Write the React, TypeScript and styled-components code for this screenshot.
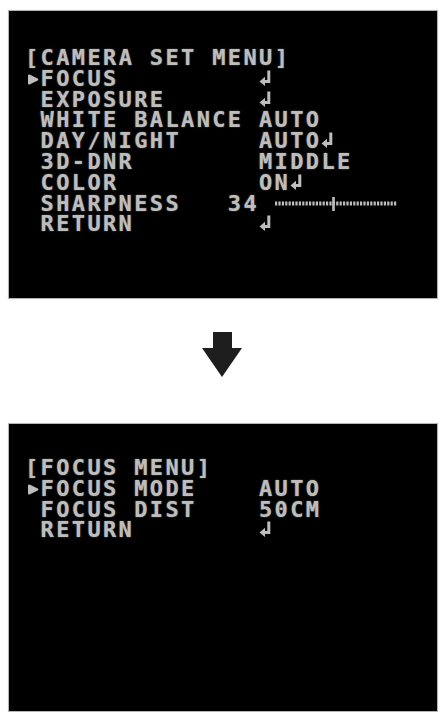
import React from "react";
import styled, { createGlobalStyle } from "styled-components";

const CELL = 15.6;
const LINE = 20.8;

const GlobalStyle = createGlobalStyle`
  html, body {
    margin: 0;
    padding: 0;
    background: #fff;
  }
  * {
    box-sizing: border-box;
  }
`;

interface Row {
  label: string;
  value?: string;
  enter?: boolean;
  slider?: boolean;
  selected?: boolean;
}

const cameraRows: Row[] = [
  { label: "FOCUS", enter: true, selected: true },
  { label: "EXPOSURE", enter: true },
  { label: "WHITE BALANCE", value: "AUTO" },
  { label: "DAY/NIGHT", value: "AUTO", enter: true },
  { label: "3D-DNR", value: "MIDDLE" },
  { label: "COLOR", value: "ON", enter: true },
  { label: "SHARPNESS   34", slider: true },
  { label: "RETURN", enter: true },
];

const focusRows: Row[] = [
  { label: "FOCUS MODE", value: "AUTO", selected: true },
  { label: "FOCUS DIST", value: "50CM" },
  { label: "RETURN", enter: true },
];

function EnterIcon() {
  return (
    <EnterSvg viewBox="0 0 13 16" width="13" height="16">
      <path d="M9.8 0.5 L9.8 11.5 L5 11.5" stroke="currentColor" strokeWidth="3" fill="none" />
      <path d="M0.5 11.5 L6 6.8 L6 16 Z" fill="currentColor" />
    </EnterSvg>
  );
}

function Pointer() {
  return (
    <PointerSvg viewBox="0 0 12 11" width="12" height="11">
      <path
        d="M1 1.5 Q1 0 2.5 0.6 L10.8 4.6 Q12 5.5 10.8 6.4 L2.5 10.4 Q1 11 1 9.5 Z"
        fill="currentColor"
      />
    </PointerSvg>
  );
}

function Slider() {
  const dots = [];
  for (let i = 0; i < 36; i++) {
    dots.push(<rect key={i} x={i * 3.4} y={4.5} width={2.2} height={4} fill="currentColor" />);
  }
  return (
    <SliderSvg viewBox="0 0 122 14" width="122" height="14">
      {dots}
      <rect x={57.2} y={0} width={2.6} height={14} fill="currentColor" />
    </SliderSvg>
  );
}

function Menu({ title, rows, padTop }: { title: string; rows: Row[]; padTop: number }) {
  return (
    <Screen $padTop={padTop}>
      <Title>{title}</Title>
      {rows.map((r) => (
        <MenuRow key={r.label}>
          <Mark>{r.selected ? <Pointer /> : null}</Mark>
          <Label>{r.label}</Label>
          <Value>
            {r.value}
            {r.enter ? <EnterIcon /> : null}
            {r.slider ? <Slider /> : null}
          </Value>
        </MenuRow>
      ))}
    </Screen>
  );
}

export default function App() {
  return (
    <Page>
      <GlobalStyle />
      <Menu title="[CAMERA SET MENU]" rows={cameraRows} padTop={37} />
      <ArrowBox>
        <svg viewBox="0 0 40 45" width="40" height="45">
          <path d="M11 0 H30 V16 H40 L20 45 L0 16 H11 Z" fill="#1e1e1e" />
        </svg>
      </ArrowBox>
      <Menu title="[FOCUS MENU]" rows={focusRows} padTop={34} />
    </Page>
  );
}

const Page = styled.div`
  width: 443px;
  height: 712px;
  padding: 10px 5px 0 8px;
  display: flex;
  flex-direction: column;
`;

const Screen = styled.div<{ $padTop: number }>`
  width: 430px;
  height: 289px;
  background: #000;
  border: 1px solid #b5b5b5;
  box-shadow: 0 0 1px #ddd;
  padding: ${({ $padTop }) => $padTop}px 0 0 16px;
  color: #bdbdbd;
  font-family: "DejaVu Sans Mono", "Liberation Mono", monospace;
  font-weight: bold;
  font-size: 22px;
  line-height: ${LINE}px;
  letter-spacing: 2.36px;
  text-shadow: 0 0 1.5px rgba(190, 190, 190, 0.7);
  white-space: pre;
`;

const Title = styled.div`
  height: ${LINE}px;
`;

const MenuRow = styled.div`
  display: grid;
  grid-template-columns: ${CELL}px ${CELL * 14}px auto;
  height: ${LINE}px;
  align-items: start;
`;

const Mark = styled.div`
  display: flex;
  align-items: flex-start;
  height: ${LINE}px;
  padding-left: 2px;
  padding-top: 5px;
`;

const PointerSvg = styled.svg`
  display: block;
`;

const Label = styled.div``;

const Value = styled.div`
  display: flex;
  align-items: flex-start;
`;

const EnterSvg = styled.svg`
  display: block;
  margin-top: 1px;
`;

const SliderSvg = styled.svg`
  display: block;
  margin-left: ${CELL}px;
  margin-top: 3px;
`;

const ArrowBox = styled.div`
  height: 124px;
  display: flex;
  justify-content: center;
  padding-top: 33px;
  padding-right: 3px;
`;
